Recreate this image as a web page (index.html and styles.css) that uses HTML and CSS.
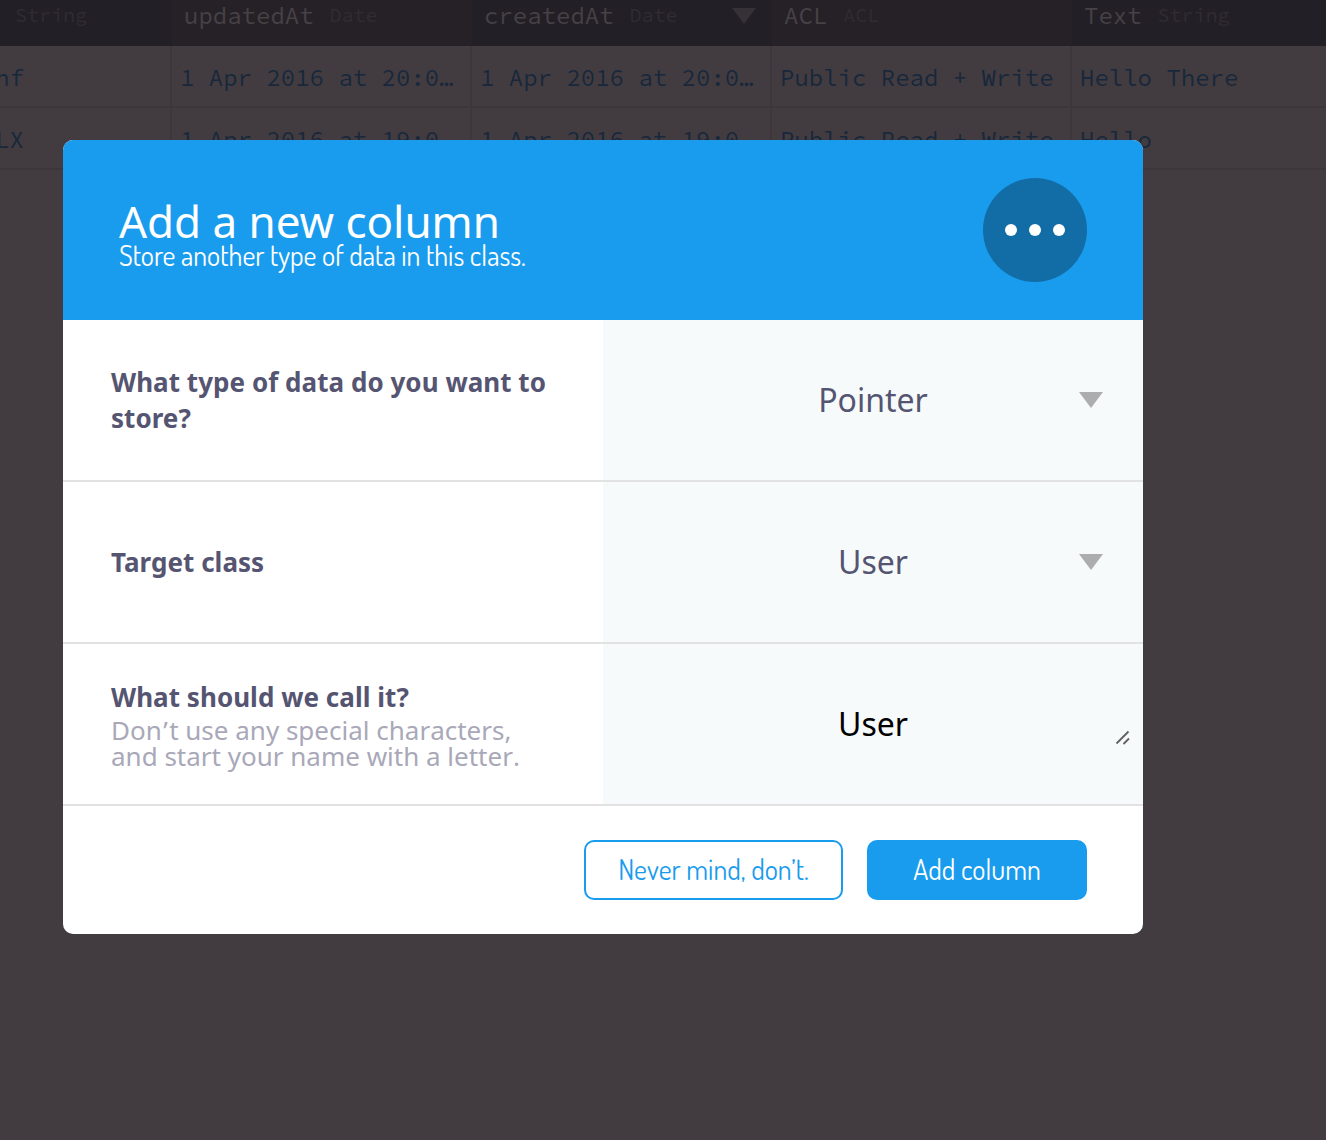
FILE: index.html
```html
<!DOCTYPE html>
<html lang="en">
<head>
<meta charset="utf-8">
<title>Add a new column</title>
<link rel="stylesheet" href="styles.css">
</head>
<body>
<div class="browser">
  <div class="grid head">
    <div class="th first"><span class="type">String</span></div>
    <div class="th alt"><span>updatedAt</span><span class="type">Date</span></div>
    <div class="th"><span>createdAt</span><span class="type">Date</span><svg class="sort" width="24" height="16" viewBox="0 0 24 16"><path d="M0 0h24L12 16z"/></svg></div>
    <div class="th alt"><span>ACL</span><span class="type">ACL</span></div>
    <div class="th"><span>Text</span><span class="type">String</span></div>
  </div>
  <div class="grid row">
    <div class="td first">nf</div>
    <div class="td">1 Apr 2016 at 20:0…</div>
    <div class="td">1 Apr 2016 at 20:0…</div>
    <div class="td">Public Read + Write</div>
    <div class="td">Hello There</div>
  </div>
  <div class="grid row">
    <div class="td first">LX</div>
    <div class="td">1 Apr 2016 at 19:0…</div>
    <div class="td">1 Apr 2016 at 19:0…</div>
    <div class="td">Public Read + Write</div>
    <div class="td">Hello</div>
  </div>
</div>
<div class="modal">
  <header class="modal-head">
    <div class="titles">
      <h1 class="title">Add a new column</h1>
      <p class="subtitle">Store another type of data in this class.</p>
    </div>
    <div class="more"><i class="dot"></i><i class="dot"></i><i class="dot"></i></div>
  </header>
  <div class="field">
    <div class="label"><strong>What type of data do you want to store?</strong></div>
    <div class="value"><span>Pointer</span><svg class="caret" width="24" height="16" viewBox="0 0 24 16"><path d="M0 0h24L12 16z"/></svg></div>
  </div>
  <div class="field">
    <div class="label"><strong>Target class</strong></div>
    <div class="value"><span>User</span><svg class="caret" width="24" height="16" viewBox="0 0 24 16"><path d="M0 0h24L12 16z"/></svg></div>
  </div>
  <div class="field">
    <div class="label noted"><strong>What should we call it?</strong><span class="hint">Do<span class="apos">n’</span>t use any special characters,<br>and start your name with a letter.</span></div>
    <div class="value typed"><span>User</span><svg class="grip" width="16" height="16" viewBox="0 0 16 16"><path d="M1.500 13.500L13.500 1.500M8.500 14L14 8.500"/></svg></div>
  </div>
  <footer class="modal-foot">
    <div class="btn outline">Never mind, don’t.</div>
    <div class="btn solid">Add column</div>
  </footer>
</div>
</body>
</html>
```
FILE: styles.css
```css
* { box-sizing: border-box; }
body {
  margin: 0;
  height: 1140px;
  position: relative;
  overflow: hidden;
  background: #423c40;
  font-family: "Noto Sans", sans-serif;
}
.browser {
  margin-left: -6px;
  font-family: "Source Code Pro", "Liberation Mono", monospace;
  font-size: 24px;
}
.grid {
  display: grid;
  grid-template-columns: 178px 300px 300px 300px 254px;
}
.head { height: 46px; grid-template-rows: 46px; background: #221f26; color: #464145; }
.th {
  display: flex;
  align-items: center;
  gap: 16px;
  padding: 0 16px 14px 12px;
  line-height: 30px;
}
.th.first { padding-left: 21px; }
.th.alt { background: #262127; }
.type { font-size: 20px; line-height: 28px; padding-bottom: 2px; color: #302c32; }
.sort { flex: none; margin-left: auto; fill: #353137; }
.row { height: 62px; color: #18283c; }
.td {
  padding: 1px 8px 0;
  line-height: 62px;
  white-space: nowrap;
  overflow: hidden;
  border-right: 2px solid #3d373b;
  border-bottom: 2px solid #3d373b;
}
.td.first { padding-left: 1px; }
.td:last-child { border-right: 0; }

.modal {
  position: absolute;
  left: 63px;
  top: 140px;
  width: 1080px;
  border-radius: 10px;
  overflow: hidden;
  background: #fff;
}
.modal-head {
  height: 180px;
  padding: 0 56px;
  display: flex;
  align-items: center;
  justify-content: space-between;
  background: #199cee;
  color: #fff;
}
.titles { padding-top: 8px; }
.title { margin: 0; font-size: 44px; font-weight: 400; line-height: 44px; letter-spacing: -.05px; white-space: nowrap; }
.subtitle, .btn { font-family: "Dosis", "Lato", sans-serif; font-size: 28px; font-weight: 400; white-space: nowrap; }
.subtitle { margin: 0; padding-bottom: 2px; line-height: 24px; }
.more {
  width: 104px;
  height: 104px;
  border-radius: 50%;
  background: #126da7;
  display: flex;
  align-items: center;
  justify-content: center;
  gap: 12px;
}
.dot { width: 12px; height: 12px; border-radius: 50%; background: #fff; }

.field {
  display: grid;
  grid-template-columns: 1fr 1fr;
  height: 162px;
  border-bottom: 2px solid #e2e2e3;
}
.label {
  display: flex;
  flex-direction: column;
  justify-content: center;
  padding: 0 48px;
  font-size: 26px;
  line-height: 36px;
  color: #555572;
}
.label strong { letter-spacing: .04px; }
.noted { font-kerning: none; }
.noted strong { line-height: 34px; }
.hint { margin-top: 3px; line-height: 26px; color: #a9a8b8; white-space: nowrap; }
.apos { letter-spacing: 1.4px; }
.value {
  position: relative;
  display: flex;
  align-items: center;
  justify-content: center;
  padding-bottom: 2px;
  background: #f6fafb;
  font-size: 32px;
  color: #555572;
}
.typed { color: #000; }
.caret { position: absolute; right: 40px; top: 72px; fill: #acadaf; }
.grip { position: absolute; right: 12px; top: 86px; fill: none; stroke: #5f6163; stroke-width: 1.8; }

.modal-foot {
  height: 128px;
  padding: 0 56px;
  display: flex;
  align-items: center;
  justify-content: flex-end;
  gap: 24px;
}
.btn {
  height: 60px;
  padding-bottom: 2px;
  border-radius: 10px;
  display: flex;
  align-items: center;
  justify-content: center;
}
.outline { width: 259px; border: 2px solid #199cee; color: #199cee; }
.solid { width: 220px; background: #199cee; color: #fff; }
```
